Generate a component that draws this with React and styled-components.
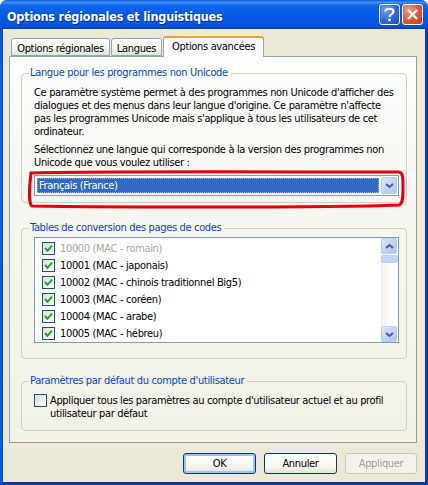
import React from 'react';
import styled, { createGlobalStyle } from 'styled-components';

const GlobalStyle = createGlobalStyle`
  html, body {
    margin: 0;
    padding: 0;
    background: #fff;
  }
  * {
    box-sizing: border-box;
  }
`;

const Window = styled.div`
  position: relative;
  width: 428px;
  height: 485px;
  display: flex;
  flex-direction: column;
  overflow: hidden;
  font-family: "DejaVu Sans Condensed", "DejaVu Sans", Verdana, sans-serif;
  font-stretch: condensed;
  font-size: 11px;
  letter-spacing: -0.34px;
  color: #000;
  background: #0a55e0;
  border-radius: 7px 7px 0 0;
`;

const TitleBar = styled.div`
  height: 29px;
  flex: none;
  display: flex;
  align-items: center;
  justify-content: space-between;
  padding: 0 5px 0 7px;
  background: linear-gradient(180deg, #0a5be0 0%, #3c92f8 8%, #0f66ec 18%, #0458e4 55%, #0556e6 80%, #0a4fd0 92%, #0240b4 100%);
`;

const Title = styled.div`
  color: #fff;
  font-size: 12.5px;
  font-weight: 700;
  letter-spacing: -0.2px;
  padding-top: 3px;
  text-shadow: 1px 1px 0 #0a2f9c;
`;

const TitleButtons = styled.div`
  display: flex;
  gap: 2px;
`;

const TitleButton = styled.div`
  width: 21px;
  height: 21px;
  display: flex;
  align-items: center;
  justify-content: center;
  border: 1px solid #fff;
  border-radius: 3px;
  background: ${p => p.$close
    ? 'radial-gradient(circle at 30% 25%, #f0a088 0%, #e0603c 45%, #c43a18 100%)'
    : 'radial-gradient(circle at 30% 25%, #6f9cf4 0%, #2f66e4 55%, #1c48c4 100%)'};
`;

const Body = styled.div`
  flex: 1;
  display: flex;
  flex-direction: column;
  background: #ece9d8;
  padding: 8px 8px 0 6px;
  border-left: 3px solid #0855e0;
  border-right: 3px solid #0b3aa8;
  border-bottom: 3px solid #0b3aa8;
`;

const Tabs = styled.div`
  display: flex;
  align-items: flex-end;
  height: 19px;
  padding-left: 2px;
  flex: none;
  position: relative;
  z-index: 1;
`;

const Tab = styled.div`
  height: ${p => (p.$active ? '21px' : '18px')};
  width: ${p => p.$w}px;
  display: flex;
  align-items: center;
  justify-content: center;
  padding-top: ${p => (p.$active ? '0' : '2px')};
  padding-bottom: ${p => (p.$active ? '2px' : '0')};
  margin-right: ${p => (p.$active ? '0' : '1px')};
  margin-bottom: ${p => (p.$active ? '-1px' : '0')};
  background: ${p => (p.$active ? '#fcfcfe' : 'linear-gradient(180deg, #fff 0%, #f4f3ec 60%, #e6e3d4 100%)')};
  border: 1px solid #91a7b4;
  border-bottom: ${p => (p.$active ? '0' : '1px solid #91a7b4')};
  border-top: ${p => (p.$active ? '2px solid #f0a22c' : '1px solid #91a7b4')};
  border-radius: 3px 3px 0 0;
  white-space: nowrap;
`;

const Panel = styled.div`
  height: 387px;
  flex: none;
  display: flex;
  flex-direction: column;
  padding: 9px 9px 0 11px;
  background: linear-gradient(180deg, #fdfdfd 0%, #f6f5ef 40%, #f3f2ea 100%);
  border: 1px solid #91a7b4;
  border-right-color: #9a9a90;
  border-bottom-color: #9a9a90;
`;

const Group = styled.fieldset`
  margin: 0;
  height: ${p => p.$h}px;
  flex: none;
  margin-bottom: ${p => p.$gap || 0}px;
  padding: 0 8px 0 12px;
  border: 1px solid #d0d0bf;
  border-radius: 4px;
  min-width: 0;
`;

const Legend = styled.legend`
  margin-left: -5px;
  padding: 0 3px 0 1px;
  color: #0046d5;
  line-height: 14px;
  white-space: nowrap;
`;

const Paragraph = styled.p`
  margin: 0 0 ${p => p.$gap || 0}px;
  padding-top: ${p => p.$top || 0}px;
  line-height: 13px;
  white-space: nowrap;
`;

const Combo = styled.div`
  height: 21px;
  margin: 6px 0 0 0;
  width: 365px;
  display: flex;
  align-items: center;
  gap: 2px;
  padding: 2px 1px 2px 2px;
  background: #fff;
  border: 1px solid #7f9db9;
`;

const ComboValue = styled.div`
  flex: 1;
  height: 15px;
  padding-left: 2px;
  line-height: 15px;
  color: #fff;
  background: #316ac5;
  outline: 1px dotted #a8b8d8;
  outline-offset: -1px;
`;

const ArrowButton = styled.div`
  width: 16px;
  height: ${p => p.$h || 17}px;
  flex: none;
  display: flex;
  align-items: center;
  justify-content: center;
  border: 1px solid #bccdf0;
  border-radius: 2px;
  background: linear-gradient(135deg, #dfe8fc 0%, #c3d3f7 50%, #aec4f2 100%);
`;

const List = styled.div`
  height: 106px;
  width: 365px;
  margin-top: 2px;
  display: flex;
  background: #fff;
  border: 1px solid #7f9db9;
`;

const ListRows = styled.div`
  flex: 1;
  display: flex;
  flex-direction: column;
  padding: 2px 0 0 7px;
`;

const Row = styled.div`
  height: 17px;
  display: flex;
  align-items: center;
  gap: 5px;
  white-space: nowrap;
  color: ${p => (p.$disabled ? '#a6a69c' : '#000')};
`;

const Box = styled.span`
  width: 13px;
  height: 13px;
  flex: none;
  display: flex;
  align-items: center;
  justify-content: center;
  border: 1px solid #1c5180;
  background: linear-gradient(135deg, #dcdcd7 0%, #f2f2ee 60%, #fff 100%);
`;

const ScrollBar = styled.div`
  width: 17px;
  flex: none;
  display: flex;
  flex-direction: column;
  background: linear-gradient(90deg, #f3f1ec 0%, #fdfdfa 60%, #fff 100%);
`;

const Thumb = styled.div`
  height: 8px;
  margin: 1px 0 auto;
  border: 1px solid #bccdf0;
  border-radius: 2px;
  background: #c6d4f6;
`;

const OptionRow = styled.div`
  display: flex;
  gap: 3px;
  margin: 6px 0 0 0;
`;

const Footer = styled.div`
  display: flex;
  justify-content: flex-end;
  gap: 8px;
  margin-top: 10px;
  flex: none;
`;

const Button = styled.div`
  width: ${p => p.$w}px;
  height: 21px;
  display: flex;
  align-items: center;
  justify-content: center;
  border: 1px solid ${p => (p.$disabled ? '#c9c7ba' : '#003c74')};
  border-radius: 3px;
  color: ${p => (p.$disabled ? '#a1a192' : '#000')};
  background: ${p => (p.$disabled ? '#f4f3ea' : 'linear-gradient(180deg, #fff 0%, #f6f5ef 70%, #e4e1d4 100%)')};
  box-shadow: ${p => (p.$default ? 'inset 0 0 0 2px #a6c0ec' : 'none')};
`;

const Ring = styled.svg`
  position: absolute;
  left: 27px;
  top: 169px;
  pointer-events: none;
`;

const Chevron = ({ up }) => (
  <svg width="9" height="7" viewBox="0 0 9 7">
    <path d={up ? 'M1 5 L4.5 2 L8 5' : 'M1 2 L4.5 5 L8 2'} fill="none" stroke="#4d6185" strokeWidth="2" />
  </svg>
);

const Check = () => (
  <svg width="9" height="9" viewBox="0 0 9 9">
    <path d="M1 4 L3.5 6.8 L8 1.6" fill="none" stroke="#21a121" strokeWidth="2" />
  </svg>
);

const pages = [
  { label: '10000 (MAC - romain)', disabled: true },
  { label: '10001 (MAC - japonais)' },
  { label: '10002 (MAC - chinois traditionnel Big5)' },
  { label: '10003 (MAC - coréen)' },
  { label: '10004 (MAC - arabe)' },
  { label: '10005 (MAC - hébreu)' },
];

const App = () => {
  return (
    <Window>
      <GlobalStyle />
      <TitleBar>
        <Title>Options régionales et linguistiques</Title>
        <TitleButtons>
          <TitleButton>
            <svg width="11" height="15" viewBox="0 0 11 15">
              <path d="M1.5 4.5 C1.5 0.8 9.5 0.8 9.5 4.5 C9.5 7.2 5.5 7 5.5 10" fill="none" stroke="#fff" strokeWidth="2.2" />
              <rect x="4.2" y="11.6" width="2.6" height="2.6" fill="#fff" />
            </svg>
          </TitleButton>
          <TitleButton $close>
            <svg width="13" height="13" viewBox="0 0 13 13">
              <path d="M2 2 L11 11 M11 2 L2 11" fill="none" stroke="#fff" strokeWidth="2.4" />
            </svg>
          </TitleButton>
        </TitleButtons>
      </TitleBar>
      <Body>
        <Tabs>
          <Tab $w={99}>Options régionales</Tab>
          <Tab $w={51}>Langues</Tab>
          <Tab $w={101} $active>Options avancées</Tab>
        </Tabs>
        <Panel>
          <Group $h={137} $gap={18}>
            <Legend>Langue pour les programmes non Unicode</Legend>
            <Paragraph $top={6} $gap={5}>
              Ce paramètre système permet à des programmes non Unicode d'afficher des<br />
              dialogues et des menus dans leur langue d'origine. Ce paramètre n'affecte<br />
              pas les programmes Unicode mais s'applique à tous les utilisateurs de cet<br />
              ordinateur.
            </Paragraph>
            <Paragraph>
              Sélectionnez une langue qui corresponde à la version des programmes non<br />
              Unicode que vous voulez utiliser :
            </Paragraph>
            <Combo>
              <ComboValue>Français (France)</ComboValue>
              <ArrowButton><Chevron /></ArrowButton>
            </Combo>
          </Group>
          <Group $h={138} $gap={15}>
            <Legend>Tables de conversion des pages de codes</Legend>
            <List>
              <ListRows>
                {pages.map(page => (
                  <Row key={page.label} $disabled={page.disabled}>
                    <Box><Check /></Box>
                    {page.label}
                  </Row>
                ))}
              </ListRows>
              <ScrollBar>
                <ArrowButton $h={16}><Chevron up /></ArrowButton>
                <Thumb />
                <ArrowButton $h={16}><Chevron /></ArrowButton>
              </ScrollBar>
            </List>
          </Group>
          <Group $h={57}>
            <Legend>Paramètres par défaut du compte d'utilisateur</Legend>
            <OptionRow>
              <Box />
              <Paragraph>
                Appliquer tous les paramètres au compte d'utilisateur actuel et au profil<br />
                utilisateur par défaut
              </Paragraph>
            </OptionRow>
          </Group>
        </Panel>
        <Footer>
          <Button $w={73} $default>OK</Button>
          <Button $w={73}>Annuler</Button>
          <Button $w={72} $disabled>Appliquer</Button>
        </Footer>
      </Body>
      <Ring width="380" height="42" viewBox="0 0 380 42">
        <path d="M4 4 C60 2 250 3 372 3 C376 4 376 8 376 18 C376 28 376 35 372 36 C300 39 60 38 5 37 C2 35 2 20 4 4 Z" fill="none" stroke="#e0000f" strokeWidth="3" />
      </Ring>
    </Window>
  );
};

export default App;
